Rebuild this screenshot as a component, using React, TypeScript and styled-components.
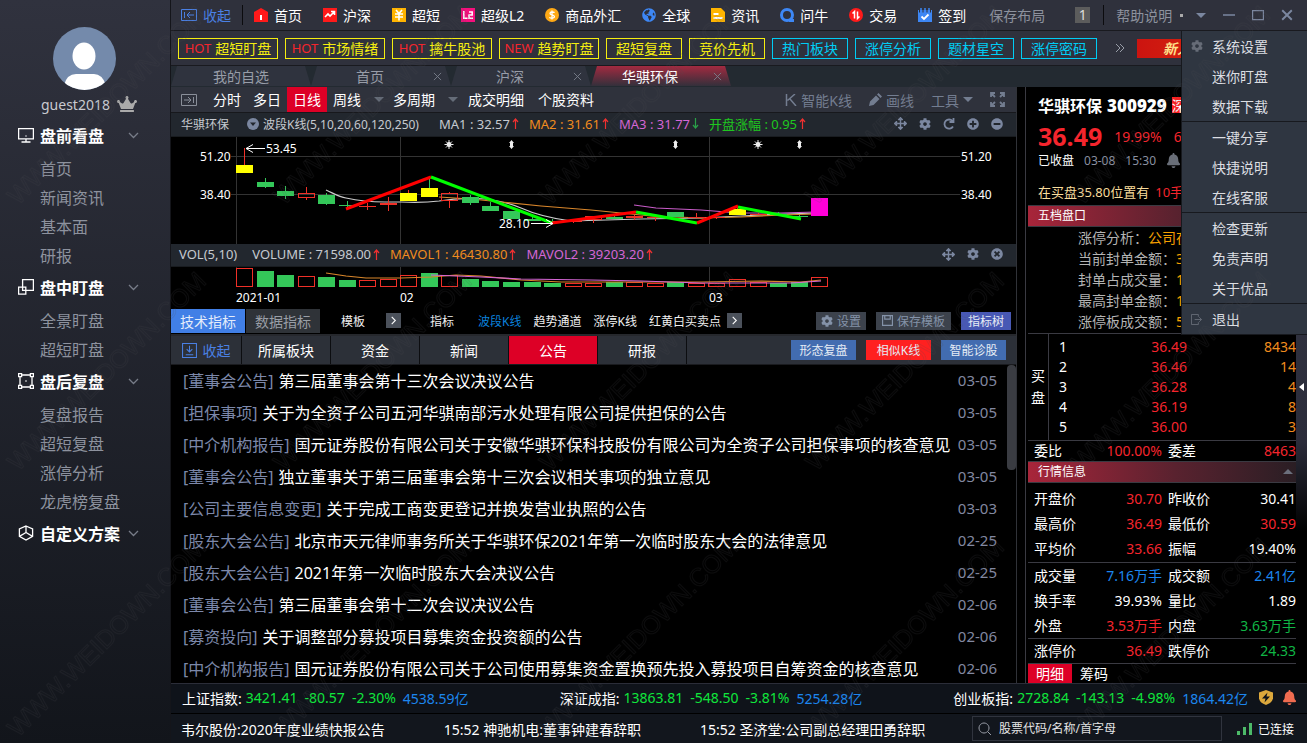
import React from "react";
import styled, { createGlobalStyle, css } from "styled-components";
import {
  FaArrowsAlt,
  FaBell,
  FaCog,
  FaCrown,
  FaGlobeAmericas,
  FaMinusCircle,
  FaPlusCircle,
  FaTimesCircle,
} from "react-icons/fa";

const c = {
  red: "#f5252d",
  accent: "#dd0026",
  orange: "#f08c1e",
  green: "#10b545",
  lime: "#10e53c",
  blue: "#1c86ee",
  slate: "#7b87a0",
  muted: "#8d929e",
  line: "#3a3a42",
};

const GlobalStyle = createGlobalStyle`
  * { box-sizing: border-box; }
  body {
    margin: 0;
    background: #000;
    color: #fff;
    font-family: "Noto Sans", "Noto Sans CJK SC", sans-serif;
    font-size: 14px;
  }
  button, input { font: inherit; color: inherit; }
  button { border: 0; padding: 0; margin: 0; background: none; cursor: pointer; white-space: nowrap; }
  a { color: inherit; text-decoration: none; }
  ul { list-style: none; margin: 0; padding: 0; }
  svg { display: block; flex: none; }
  table { border-collapse: collapse; }
`;

const Page = styled.div`
  position: relative;
  display: flex;
  height: 100vh;
  min-height: 700px;
  overflow: hidden;
  white-space: nowrap;
`;

/* ---------- sidebar ---------- */

const Sidebar = styled.nav`
  flex: none;
  width: 171px;
  border-right: 1px solid #14151a;
  background: linear-gradient(#30323e, #12151b);
`;

const Profile = styled.div`
  height: 118px;
  padding-top: 27px;
`;

const Avatar = styled.svg`
  margin-left: 53px;
`;

const UserName = styled.div`
  display: flex;
  align-items: center;
  gap: 7px;
  height: 28px;
  padding-left: 41px;
  color: #c8cad0;
  svg { color: #aaa; }
`;

const GroupButton = styled.button`
  display: grid;
  grid-template-columns: 16px 80px 12px;
  column-gap: 6px;
  align-items: center;
  width: 100%;
  height: 36px;
  padding: 0 0 2px 18px;
  font-size: 16px;
  font-weight: 700;
  text-align: left;
  svg:last-child { color: #777c88; margin-left: 2px; }
`;

const SideLink = styled.a`
  display: block;
  height: 29px;
  padding-left: 40px;
  line-height: 31px;
  font-size: 16px;
  color: ${c.muted};
`;

const Stroke = (p: { size?: number; w?: number; d: string; box?: number }) => (
  <svg width={p.size ?? 16} height={p.size ?? 16} viewBox={`0 0 ${p.box ?? 16} ${p.box ?? 16}`}
    fill="none" stroke="currentColor" strokeWidth={p.w ?? 1.2}>
    <path d={p.d} />
  </svg>
);

const sideGroups = [
  { title: "盘前看盘", icon: "M.6 1.6h14.8v10.2H.6zM8 11.8v2.8M3.5 15h9M7.5 9h1", items: ["首页", "新闻资讯", "基本面", "研报"] },
  { title: "盘中盯盘", icon: "M4.6 .6h10.8v10.8H4.6zM.6 8.2h7.2v7H.6zM4.6 8v3.4h3.2", items: ["全景盯盘", "超短盯盘"] },
  { title: "盘后复盘", icon: "M2 3.5v9M14 3.5v9M3.5 2h9M3.5 14h9M.6.6h3v3h-3zM12.4.6h3v3h-3zM.6 12.4h3v3h-3zM12.4 12.4h3v3h-3zM7.4 8h1.2", items: ["复盘报告", "超短复盘", "涨停分析", "龙虎榜复盘"] },
  { title: "自定义方案", icon: "M8 1l6.6 3v7.4L8 15l-6.6-3.600V4zM8 1v6.500M8 7.500L1.400 11.400M8 7.500l6.600 3.900", items: [] },
];

/* ---------- top area ---------- */

const Main = styled.main`
  position: relative;
  flex: 1;
  min-width: 0;
  display: flex;
  flex-direction: column;
`;

const TopBar = styled.header`
  display: flex;
  align-items: center;
  flex: none;
  height: 31px;
  padding: 0 14px 0 10px;
  border-bottom: 1px solid #191a1f;
  background: #2f313c;
`;

const Collapse = styled.button`
  display: flex;
  align-items: center;
  gap: 6px;
  color: #4a80e4;
`;

const Rule = styled.span<{ $left: number; $right: number }>`
  width: 1px;
  height: 20px;
  margin: 0 ${(p) => p.$right}px 0 ${(p) => p.$left}px;
  background: #0b0b0e;
`;

const AppLinks = styled.div`
  display: flex;
  gap: 21px;
`;

const AppLink = styled.button`
  display: flex;
  align-items: center;
  gap: 6px;
`;

const TopText = styled.button`
  color: ${c.muted};
  margin-left: 23px;
`;

const Counter = styled.span`
  width: 15px;
  height: 16px;
  margin-left: 30px;
  line-height: 16px;
  text-align: center;
  background: #5c5c5c;
  color: #ddd;
`;

const HelpButton = styled.button`
  display: flex;
  align-items: center;
  gap: 8px;
  color: ${c.muted};
`;

const Dot = styled.i`
  width: 3px;
  height: 3px;
  background: #aaa;
`;

const WindowButtons = styled.div`
  display: flex;
  gap: 17px;
  margin-left: auto;
  color: ${c.slate};
`;

const TagBar = styled.div`
  display: flex;
  align-items: center;
  flex: none;
  gap: 7px;
  height: 35px;
  padding-left: 7px;
  border-bottom: 1px solid #191a1f;
  background: #2f313c;
  overflow: hidden;
`;

const Tag = styled.button<{ $tone: "yellow" | "cyan"; $wide?: boolean }>`
  flex: none;
  display: flex;
  align-items: center;
  justify-content: center;
  gap: 4px;
  width: ${(p) => (p.$wide ? 100 : 76)}px;
  height: 21px;
  border: 1px solid;
  color: ${(p) => (p.$tone === "yellow" ? "#f5ee10" : "#00cdf5")};
  b { font-weight: 400; font-size: 13px; color: ${c.red}; }
`;

const More = styled.button`
  margin: 0 5px 0 11px;
  color: #999ea8;
`;

const Banner = styled.a`
  flex: 1;
  height: 19px;
  padding-left: 26px;
  line-height: 19px;
  font-weight: 700;
  font-style: italic;
  color: #ffe08a;
  background: linear-gradient(90deg, #cc1410, #e03a10);
`;

const TabBar = styled.div`
  display: flex;
  flex: none;
  height: 21px;
  background: #232a31;
`;

const PageTab = styled.div<{ $active?: boolean; $closable?: boolean }>`
  position: relative;
  display: flex;
  align-items: center;
  justify-content: center;
  width: 140px;
  height: 20px;
  padding-right: ${(p) => (p.$closable ? 22 : 0)}px;
  color: ${(p) => (p.$active ? "#fff" : "#989da8")};
  background: ${(p) => (p.$active ? "linear-gradient(#a22a40, #33303b)" : "#2f333e")};
  clip-path: polygon(6px 0, 134px 0, 140px 100%, 0 100%);
`;

const TabClose = styled.button`
  position: absolute;
  right: 9px;
  color: #7b808c;
`;

/* ---------- workspace ---------- */

const Workspace = styled.div`
  flex: 1;
  min-height: 0;
  display: flex;
`;

const ChartColumn = styled.section`
  flex: 1;
  min-width: 0;
  display: flex;
  flex-direction: column;
  border-right: 1px solid #303238;
`;

const PeriodBar = styled.div`
  display: flex;
  align-items: center;
  flex: none;
  height: 26px;
  padding: 0 11px 0 10px;
  border-bottom: 1px solid #17181c;
  background: #2f323c;
`;

const Period = styled.button<{ $active?: boolean; $wide?: boolean }>`
  height: 25px;
  padding: 0 ${(p) => (p.$wide ? 7 : 6)}px 2px;
  background: ${(p) => (p.$active ? c.accent : "none")};
`;

const CaretBox = styled.span`
  width: 20px;
  padding-left: 3px;
  display: flex;
  justify-content: center;
  color: #656c78;
`;

const PeriodRight = styled.div`
  display: flex;
  align-items: center;
  gap: 17px;
  margin-left: auto;
  color: #737d90;
`;

const ToolButton = styled.button`
  display: flex;
  align-items: center;
  gap: 4px;
`;

const Caret = ({ up }: { up?: boolean }) => (
  <svg width="10" height="5" viewBox="0 0 10 5" fill="currentColor">
    <path d={up ? "M0 5h10L5 0z" : "M0 0h10L5 5z"} />
  </svg>
);

const IndicatorBar = styled.div`
  display: flex;
  align-items: center;
  flex: none;
  height: 24px;
  padding: 0 13px 2px 10px;
  border-bottom: 1px solid #191c20;
  background: #22272e;
  font-size: 12px;
  color: #c6cad0;
`;

const VolumeBar = styled(IndicatorBar)`
  height: 23px;
  padding-left: 8px;
`;

const Reading = styled.span<{ $color?: string }>`
  display: flex;
  align-items: center;
  gap: 2px;
  margin-right: 10px;
  font-size: 13px;
  color: ${(p) => p.$color ?? "#c6cad0"};
`;

const VolumeName = styled.span`
  margin-right: 15px;
  font-size: 13px;
`;

const Indicator = styled.span`
  display: flex;
  align-items: center;
  gap: 4px;
  margin: 0 20px 0 18px;
`;

const BarIcons = styled.div`
  display: flex;
  align-items: center;
  gap: 12px;
  margin-left: auto;
  color: ${c.slate};
`;

const Arrow = ({ down }: { down?: boolean }) => (
  <svg width="7" height="11" viewBox="0 0 7 11" fill="none" stroke={down ? "#2aa048" : "#f03030"} strokeWidth="1.2">
    <path d={down ? "M3.500 0v10M1 7l2.500 3L6 7" : "M3.500 11V1M1 4l2.500-3L6 4"} />
  </svg>
);

const Plot = styled.svg`
  width: 100%;
  font-size: 12px;
  background: #000;
`;

type Candle = [kind: "y" | "g" | "r" | "m", top: number, bottom: number, high: number, low: number, volume: number];

const candles: Candle[] = [
  ["y", 28, 36, 11, 28, 19], ["g", 45, 50, 41, 51, 16], ["g", 54, 59, 49, 62, 12], ["r", 56, 61, 50, 63, 11],
  ["g", 58, 67, 56, 68, 10], ["g", 68, 69, 64, 71, 7], ["r", 69, 70, 66, 73, 7], ["r", 66, 68, 60, 74, 8],
  ["y", 56, 64, 53, 56, 12], ["y", 51, 60, 40, 51, 14], ["r", 56, 64, 55, 71, 12], ["g", 60, 66, 58, 68, 8],
  ["g", 69, 74, 65, 74, 6], ["g", 74, 82, 74, 82, 5], ["g", 82, 84, 79, 84, 5], ["g", 84, 85, 82, 87, 4],
  ["r", 84, 85, 82, 86, 4], ["r", 79, 83, 79, 86, 4], ["g", 80, 82, 79, 82, 5], ["r", 79, 81, 78, 83, 5],
  ["r", 80, 81, 79, 84, 4], ["g", 75, 80, 75, 80, 5], ["r", 80, 81, 76, 81, 4], ["r", 80, 81, 80, 82, 4],
  ["y", 72, 78, 71, 78, 8], ["r", 77, 78, 76, 78, 5], ["g", 77, 78, 75, 79, 4], ["g", 79, 80, 78, 81, 5],
  ["m", 61, 79, 61, 79, 10],
];

const bodyColor = { y: "#ffff00", g: "#34c759", r: "#f03028", m: "#ff00d8" };
const candleX = (i: number) => 65 + Math.round(i * 20.54);
const rising = (i: number) => ![1, 2, 4, 5, 9, 11, 12, 13, 14, 15, 18, 21, 26, 27].includes(i);

const PriceChart = () => (
  <Plot height="107" role="img" aria-label="日线走势图">
    <g stroke="#333" shapeRendering="crispEdges">
      <line x1="60" x2="100%" y1="19.500" y2="19.500" />
      <line x1="60" x2="100%" y1="57.500" y2="57.500" />
      {[65.5, 229.5, 538.5].map((x) => <line key={x} x1={x} x2={x} y1="0" y2="107" />)}
    </g>
    <svg x="100%" overflow="visible">
      <rect x="-56" y="8" width="56" height="60" fill="#000" />
      <text x="-55" y="24" fill="#fff">51.20</text>
      <text x="-55" y="62" fill="#fff">38.40</text>
    </svg>
    <g fill="#fff">
      <text x="29" y="24">51.20</text>
      <text x="29" y="62">38.40</text>
    </g>
    <g fill="none" strokeWidth="1.2">
      <path stroke="#ccc" d="M155 53C162 56 168 60 175 61Q193 65 214 65H230Q252 66 268 64Q290 60 314 62Q334 64 350 71Q370 80 400 84L470 82L530 81L590 78L645 76" />
      <path stroke="#d9862b" d="M268 60L300 62L330 65L370 69L420 73L480 79L530 81L570 80L610 78L645 77" />
      <path stroke="#c85cc8" d="M463 68L485 71L530 73L568 76L610 76L645 75" />
    </g>
    <g shapeRendering="crispEdges">
      {candles.map(([k, top, bottom, high, low], i) => {
        const x = candleX(i);
        const hollow = k === "r" && bottom - top > 2;
        const wick = k === "g" || i === 9 ? "#34c759" : "#f03028";
        return (
          <g key={i}>
            <path d={`M${x + 8.5} ${high}V${top}M${x + 8.5} ${bottom}V${low}`} stroke={wick} />
            <rect x={hollow ? x + 0.5 : x} y={hollow ? top + 0.5 : top} width={hollow ? 16 : 17}
              height={hollow ? bottom - top - 1 : bottom - top}
              fill={hollow ? "none" : bodyColor[k]} stroke={hollow ? bodyColor[k] : "none"} />
          </g>
        );
      })}
    </g>
    <g fill="none" strokeWidth="3">
      <path stroke="#f00" d="M175 72L260 40" />
      <path stroke="#0f0" d="M260 40L381 86" />
      <path stroke="#f00" d="M381 86L465 75" />
      <path stroke="#0f0" d="M465 75L526 86" />
      <path stroke="#f00" d="M526 86L567 69" />
      <path stroke="#0f0" d="M567 70L630 82" />
    </g>
    <g stroke="#fff" fill="none">
      <path d="M94 11.500H75M82 7.500L75 11.500L82 15.500M360 86.500H382M375 82.500L382 86.500L375 90.500" />
    </g>
    <text x="95" y="16" fill="#fff">53.45</text>
    <text x="328" y="91" fill="#fff">28.10</text>
    {[278, 587].map((x) => (
      <g key={x} stroke="#eee" strokeWidth="1">
        <circle cx={x} cy="7.500" r="2" fill="#eee" />
        <path d={`M${x} 3v9M${x - 4.5} 7.500h9M${x - 3} 4.500l6 6M${x - 3} 10.500l6-6`} />
      </g>
    ))}
    {[340, 504, 628].map((x) => (
      <path key={x} fill="#eee" d={`M${x + 0.5} 3l2.500 3h-1v3h1l-2.500 3-2.500-3h1v-3h-1z`} />
    ))}
  </Plot>
);

const VolumeChart = () => (
  <Plot height="42" role="img" aria-label="成交量">
    <path stroke="#333" d="M65.500 0v20M229.500 0v20M538.500 0v20" />
    <g shapeRendering="crispEdges">
      {candles.map((row, i) => {
        const h = row[5];
        const x = candleX(i);
        return rising(i)
          ? <rect key={i} x={x + 0.5} y={20.5 - h} width="16" height={h - 1} fill="none" stroke="#f03028" />
          : <rect key={i} x={x} y={20 - h} width="17" height={h} fill="#34c759" />;
      })}
    </g>
    <g fill="none" strokeWidth="1.200">
      <path stroke="#d9862b" d="M155 6L175 9L195 11H230L260 10L285 8L310 9L350 13L390 15H530L590 14L630 15L650 13" />
      <path stroke="#d566d5" d="M260 8L310 10L350 12L420 13L470 14L530 16H620L650 14" />
    </g>
    <g fill="#fff">
      <text x="65" y="35">2021-01</text>
      <text x="229" y="35">02</text>
      <text x="538" y="35">03</text>
    </g>
  </Plot>
);

const TemplateBar = styled.div`
  display: flex;
  align-items: center;
  flex: none;
  height: 27px;
  padding: 0 5px 2px 0;
  border-bottom: 2px solid #26282d;
  font-size: 12px;
`;

const ModeTab = styled.button<{ $active?: boolean }>`
  width: 74px;
  height: 24px;
  margin-right: 1px;
  font-size: 14px;
  color: ${(p) => (p.$active ? "#e4ecfa" : "#999ea6")};
  background: ${(p) => (p.$active ? "#417fe6" : "#2f3338")};
`;

const TemplateText = styled.button<{ $gap: number; $active?: boolean }>`
  margin-left: ${(p) => p.$gap}px;
  color: ${(p) => (p.$active ? "#0a80dc" : "#f0f0f0")};
`;

const NextButton = styled.button<{ $gap: number }>`
  display: grid;
  place-items: center;
  width: 15px;
  height: 15px;
  margin-left: ${(p) => p.$gap}px;
  background: #4b515b;
`;

const ButtonSet = styled.div`
  display: flex;
  gap: 10px;
  margin-left: auto;
`;

const SmallButton = styled.button<{ $w: number; $bg: string; $fg?: string; $h?: number }>`
  display: flex;
  align-items: center;
  justify-content: center;
  gap: 4px;
  width: ${(p) => p.$w}px;
  height: ${(p) => p.$h ?? 18}px;
  font-size: 12px;
  background: ${(p) => p.$bg};
  color: ${(p) => p.$fg ?? "#e6ecf5"};
`;

const NewsTabs = styled.div`
  display: flex;
  flex: none;
  height: 29px;
  padding-right: 10px;
  border-bottom: 1px solid #1a1b1f;
  background: #2c3038;
`;

const NewsTab = styled.button<{ $active?: boolean; $first?: boolean }>`
  display: flex;
  align-items: center;
  justify-content: center;
  gap: 6px;
  width: ${(p) => (p.$first ? 71 : 89)}px;
  border-right: 1px solid #0c0d10;
  color: ${(p) => (p.$first ? "#4a80e4" : "#fff")};
  background: ${(p) => (p.$active ? c.accent : "none")};
`;

const NewsButtons = styled(ButtonSet)`
  padding-top: 4px;
`;

const NewsArea = styled.div`
  flex: 1;
  min-height: 0;
  display: flex;
`;

const NewsList = styled.ul`
  flex: 1;
  min-width: 0;
  overflow: hidden;
`;

const NewsRow = styled.li`
  display: flex;
  align-items: center;
  height: 32px;
  padding: 0 10px 2px 12px;
  font-size: 16px;
  span { color: #7c88aa; margin-right: 5px; }
  time { margin-left: auto; font-size: 15px; color: #8288a0; }
`;

const Thumb = styled.div`
  width: 9px;
  height: 105px;
  border-radius: 4px;
  background: #3a3c42;
`;

/* ---------- quote panel ---------- */

const QuotePanel = styled.aside`
  flex: none;
  width: 282px;
  margin-left: 8px;
  border-left: 1px solid #3a3a42;
  padding-left: 2px;
  display: flex;
`;

const QuoteBody = styled.div`
  flex: 1;
  min-width: 0;
  overflow: hidden;
`;

const SideStrip = styled.button`
  flex: none;
  display: flex;
  align-items: center;
  width: 11px;
  height: 444px;
  padding: 155px 0 0 3px;
  background: linear-gradient(#30323f 50%, #2b2c3a 80%, #000);
`;

const StockName = styled.h1`
  display: flex;
  align-items: center;
  gap: 5px;
  height: 36px;
  margin: 0;
  padding-left: 10px;
  font-size: 16px;
  b { font-size: 17px; }
  i { width: 16px; height: 16px; font: 400 14px/16px "Noto Sans CJK SC", sans-serif; background: #ff2020; }
`;

const PriceRow = styled.div`
  display: flex;
  align-items: center;
  gap: 12px;
  height: 26px;
  padding-left: 10px;
  color: ${c.red};
  b { font-size: 25px; line-height: 26px; }
`;

const StateRow = styled.div`
  display: flex;
  align-items: center;
  gap: 10px;
  height: 22px;
  padding-left: 10px;
  font-size: 12px;
  span { color: #8a90a0; }
  svg { color: #696e78; }
`;

const TipRow = styled.div`
  height: 34px;
  padding: 8px 0 0 10px;
  line-height: 26px;
  font-size: 13px;
  color: #f8dc9c;
  span { color: ${c.red}; margin-left: 6px; }
`;

const Band = styled.h2`
  display: flex;
  align-items: center;
  justify-content: space-between;
  height: 22px;
  margin: 0;
  padding: 0 3px 2px 10px;
  border: solid ${c.line};
  border-width: 1px 0;
  font-size: 12px;
  font-weight: 400;
  background: linear-gradient(90deg, #a8253a, #59222f 55%, #2a1e24);
  svg { color: #6b6f7c; }
`;

const FactList = styled.ul`
  height: 107px;
  padding-left: 50px;
  border-bottom: 1px solid ${c.line};
  color: #b4b4b4;
  li { height: 21px; line-height: 21px; }
  span { color: #f5a000; }
`;

const Depth = styled.div`
  display: flex;
  border-bottom: 1px solid ${c.line};
`;

const DepthLabel = styled.div`
  width: 21px;
  display: flex;
  align-items: center;
  justify-content: center;
  border-right: 1px solid ${c.line};
  white-space: normal;
  line-height: 22px;
  text-align: center;
`;

const DepthTable = styled.table`
  flex: 1;
  margin: 3px 0;
  td { height: 20px; padding: 0; line-height: 20px; text-align: right; }
  td:first-child { width: 10px; padding-left: 10px; text-align: left; }
  td:nth-child(2) { color: ${c.red}; width: 120px; }
  td:last-child { color: ${c.orange}; }
`;

const QuoteTable = styled.table<{ $row: number; $pad?: number }>`
  width: 100%;
  table-layout: fixed;
  ${(p) => p.$pad && css`margin: ${p.$pad}px 0 1px;`}
  th, td { height: ${(p) => p.$row}px; padding: 0; line-height: 18px; font-weight: 400; }
  th { width: 18%; padding-left: 6px; text-align: left; }
  td { width: 32%; text-align: right; }
`;

const Divider = styled.hr`
  height: 1px;
  margin: 0;
  border: 0;
  background: ${c.line};
`;

const Value = styled.td<{ $c?: string }>`
  color: ${(p) => p.$c ?? "#fff"};
`;

const DetailTabs = styled.div`
  display: flex;
  height: 20px;
`;

const DetailTab = styled.button<{ $active?: boolean }>`
  width: 44px;
  line-height: 20px;
  background: ${(p) => (p.$active ? c.accent : "none")};
`;

type Cell = [label: string, value: string, color?: string];

const Quotes = ({ rows, row, pad }: { rows: [Cell, Cell][]; row: number; pad?: number }) => (
  <QuoteTable $row={row} $pad={pad}>
    <tbody>
      {rows.map((pair) => (
        <tr key={pair[0][0]}>
          {pair.map(([label, value, color]) => (
            <React.Fragment key={label}>
              <th scope="row">{label}</th>
              <Value $c={color}>{value}</Value>
            </React.Fragment>
          ))}
        </tr>
      ))}
    </tbody>
  </QuoteTable>
);

/* ---------- bottom bars ---------- */

const IndexBar = styled.div`
  display: flex;
  align-items: center;
  flex: none;
  height: 31px;
  padding: 0 10px 2px 11px;
  border-top: 1px solid #2b2d38;
  border-bottom: 1px solid #000;
  background: #0f131a;
`;

const IndexList = styled.ul`
  flex: 1;
  display: flex;
  justify-content: space-between;
`;

const IndexItem = styled.li`
  display: flex;
  gap: 7px;
  color: ${c.lime};
  b { font-weight: 400; color: #fff; margin-right: -3px; }
  span:last-child { color: ${c.blue}; }
`;

const AlertIcons = styled.div`
  display: flex;
  gap: 9px;
  margin-left: 11px;
`;

const Ticker = styled.footer`
  display: flex;
  align-items: center;
  flex: none;
  height: 29px;
  padding: 0 13px 0 10px;
  background: #12161d;
`;

const TickerList = styled.div`
  display: flex;
  gap: 59px;
`;

const Search = styled.label`
  flex: none;
  display: flex;
  align-items: center;
  gap: 7px;
  width: 250px;
  height: 25px;
  margin-left: auto;
  padding-left: 5px;
  border: 1px solid #30343e;
  color: #9a9ea8;
`;

const SearchInput = styled.input`
  flex: 1;
  min-width: 0;
  padding: 0;
  border: 0;
  outline: 0;
  background: none;
  font-size: 12px;
  color: #fff;
  &::placeholder { color: #e6e6e6; opacity: 1; }
`;

const Connection = styled.div`
  display: flex;
  align-items: center;
  gap: 6px;
  margin-left: 15px;
  font-size: 12px;
`;

/* ---------- settings menu ---------- */

const Menu = styled.div`
  position: absolute;
  top: 31px;
  right: 0;
  width: 126px;
  border: solid #17191e;
  border-width: 0 0 1px 1px;
  background: #2f3641;
`;

const MenuGroup = styled.ul`
  & + & { border-top: 1px solid #17191e; }
`;

const MenuItem = styled.button`
  position: relative;
  display: flex;
  align-items: center;
  width: 100%;
  height: 30px;
  padding-left: 30px;
  color: #dcdee2;
  svg { position: absolute; left: 9px; color: #666c77; }
`;

const Watermark = styled.svg`
  position: absolute;
  inset: 0;
  width: 100%;
  height: 100%;
  pointer-events: none;
`;

/* ---------- icons of the top bar ---------- */

const Tile = ({ fill, children }: { fill: string; children: React.ReactNode }) => (
  <svg width="14" height="14" viewBox="0 0 14 14"><rect width="14" height="14" fill={fill} />{children}</svg>
);

const apps: [string, React.ReactNode][] = [
  ["首页", <svg width="14" height="14" viewBox="0 0 14 14"><path fill="#ff1a1a" d="M7 0l7 4v10H0V4z" /><path stroke="#fff" strokeWidth="2" d="M7 7v5" /></svg>],
  ["沪深", <Tile fill="#ff1a1a"><path d="M2 9l3-3 2 2 4-4M8 3.500h3.500V7" fill="none" stroke="#fff" strokeWidth="1.600" /></Tile>],
  ["超短", <Tile fill="#ffb400"><path d="M4 2l3 3.500L10 2M3 6h8M3 9h8M7 5.500V12.500" fill="none" stroke="#fff" strokeWidth="1.600" /></Tile>],
  ["超级L2", <Tile fill="#f50f7d"><path d="M2.800 3v7.200H6.500M8 4h3.200v3H8v3.200h4" fill="none" stroke="#fff" strokeWidth="1.500" /></Tile>],
  ["商品外汇", <svg width="14" height="14" viewBox="0 0 14 14"><circle cx="7" cy="7" r="7" fill="#ffa915" /><path d="M9.500 4.800C9 3.800 5 3.500 5 5.400s4.400 1.200 4.400 3.200S5 10.600 4.500 9.200M7 2.500v9" fill="none" stroke="#fff" strokeWidth="1.300" /></svg>],
  ["全球", <FaGlobeAmericas size={14} color="#3d87f5" />],
  ["资讯", <svg width="14" height="14" viewBox="0 0 14 14"><path fill="#ffb400" d="M0 0h10l4 4v10H0z" /><path stroke="#fff" strokeWidth="2" d="M2.500 6h5M2.500 10h9" /></svg>],
  ["问牛", <svg width="14" height="14" viewBox="0 0 14 14" fill="none" stroke="#3d87f5" strokeWidth="3"><circle cx="7" cy="7" r="5.500" /><path d="M9 12.500h5" /></svg>],
  ["交易", <svg width="14" height="14" viewBox="0 0 14 14"><circle cx="7" cy="7" r="7" fill="#ff1a1a" /><path d="M3.500 5.500l2-2v7M8.500 3.500v7l2-2" fill="none" stroke="#fff" strokeWidth="1.500" /></svg>],
  ["签到", <svg width="14" height="14" viewBox="0 0 14 14"><path fill="#3d87f5" d="M0 2h14v12H0z" /><path stroke="#3d87f5" strokeWidth="1.500" d="M3 0v4M7 0v4M11 0v4" /><path stroke="#2f313c" d="M1.500 1v3.500M5 1v3.500M9 1v3.500M12.500 1v3.500" /><path d="M3.500 8.500l2.500 2.500 4.500-4.500" fill="none" stroke="#fff" strokeWidth="1.800" /></svg>],
];

const tags: [string, "yellow" | "cyan", string?][] = [
  ["超短盯盘", "yellow", "HOT"], ["市场情绪", "yellow", "HOT"], ["擒牛股池", "yellow", "HOT"], ["趋势盯盘", "yellow", "NEW"],
  ["超短复盘", "yellow"], ["竞价先机", "yellow"], ["热门板块", "cyan"], ["涨停分析", "cyan"], ["题材星空", "cyan"], ["涨停密码", "cyan"],
];

const news = [
  ["董事会公告", "第三届董事会第十三次会议决议公告", "03-05"],
  ["担保事项", "关于为全资子公司五河华骐南部污水处理有限公司提供担保的公告", "03-05"],
  ["中介机构报告", "国元证券股份有限公司关于安徽华骐环保科技股份有限公司为全资子公司担保事项的核查意见", "03-05"],
  ["董事会公告", "独立董事关于第三届董事会第十三次会议相关事项的独立意见", "03-05"],
  ["公司主要信息变更", "关于完成工商变更登记并换发营业执照的公告", "03-03"],
  ["股东大会公告", "北京市天元律师事务所关于华骐环保2021年第一次临时股东大会的法律意见", "02-25"],
  ["股东大会公告", "2021年第一次临时股东大会决议公告", "02-25"],
  ["董事会公告", "第三届董事会第十二次会议决议公告", "02-06"],
  ["募资投向", "关于调整部分募投项目募集资金投资额的公告", "02-06"],
  ["中介机构报告", "国元证券股份有限公司关于公司使用募集资金置换预先投入募投项目自筹资金的核查意见", "02-06"],
];

const closeD = "M1 1l8 8M9 1L1 9";

export default function App() {
  return (
    <Page>
      <GlobalStyle />
      <Sidebar>
        <Profile>
          <Avatar width="63" height="63" viewBox="0 0 63 63">
            <defs><clipPath id="avatar"><circle cx="31.500" cy="31.500" r="31.500" /></clipPath></defs>
            <g clipPath="url(#avatar)">
              <rect width="63" height="63" fill="#748aab" />
              <ellipse cx="31" cy="29" rx="11.500" ry="13.500" fill="#fff" />
              <path fill="#fff" d="M11 58Q14 47 23 47H41Q49 47 53 58V63H11z" />
            </g>
          </Avatar>
          <UserName>guest2018<FaCrown size={20} /></UserName>
        </Profile>
        {sideGroups.map((g) => (
          <div key={g.title}>
            <GroupButton>
              <Stroke d={g.icon} w={1.3} />
              {g.title}
              <Stroke d="M1 3l4.500 4.500L10 3" box={11} size={11} w={1.3} />
            </GroupButton>
            {g.items.map((t) => <SideLink href="#" key={t}>{t}</SideLink>)}
          </div>
        ))}
      </Sidebar>

      <Main>
        <TopBar>
          <Collapse>
            <svg width="16" height="12" viewBox="0 0 16 12" fill="none" stroke="currentColor"><path d="M.5.5h15v11H.5zM3.500 3v6M13 6H6M9 3L6 6l3 3" /></svg>
            收起
          </Collapse>
          <Rule $left={11} $right={11} />
          <AppLinks>
            {apps.map(([name, icon]) => <AppLink key={name}>{icon}{name}</AppLink>)}
          </AppLinks>
          <TopText>保存布局</TopText>
          <Counter>1</Counter>
          <Rule $left={13} $right={12} />
          <HelpButton>帮助说明<Dot /></HelpButton>
          <WindowButtons>
            <button aria-label="菜单"><Caret /></button>
            <button aria-label="最小化"><Stroke box={12} size={12} w={1.5} d="M0 6h12" /></button>
            <button aria-label="最大化"><Stroke box={12} size={12} w={1.2} d="M.6 1.600h10.800v9H.6z" /></button>
            <button aria-label="关闭"><Stroke box={10} size={12} w={1.6} d={closeD} /></button>
          </WindowButtons>
        </TopBar>

        <TagBar>
          {tags.map(([name, tone, flag]) => (
            <Tag key={name} $tone={tone} $wide={!!flag}>{flag && <b>{flag}</b>}{name}</Tag>
          ))}
          <More aria-label="更多"><Stroke box={10} size={10} w={1} d="M1 1l4 4-4 4M5 1l4 4-4 4" /></More>
          <Banner href="#">新人</Banner>
        </TagBar>

        <TabBar>
          {["我的自选", "首页", "沪深", "华骐环保"].map((t, i) => (
            <PageTab key={t} $active={i === 3} $closable={i > 0}>
              {t}
              {i > 0 && <TabClose aria-label="关闭标签"><Stroke box={10} size={9} w={1} d={closeD} /></TabClose>}
            </PageTab>
          ))}
        </TabBar>

        <Workspace>
          <ChartColumn>
            <PeriodBar>
              <svg width="26" height="12" viewBox="0 0 26 12" fill="none" stroke="#8a8f99"><path d="M.5.5h15v11H.5zM12.500 3v6M3 6h7M7 3l3 3-3 3" /></svg>
              <Period>分时</Period>
              <Period>多日</Period>
              <Period $active>日线</Period>
              <Period>周线</Period>
              <CaretBox><Caret /></CaretBox>
              <Period>多周期</Period>
              <CaretBox><Caret /></CaretBox>
              <Period $wide>成交明细</Period>
              <Period $wide>个股资料</Period>
              <PeriodRight>
                <ToolButton><Stroke box={12} size={12} w={1.5} d="M1.500 0v12M10 0L2.500 6.500M5 5l6 7" />智能K线</ToolButton>
                <ToolButton>
                  <svg width="13" height="13" viewBox="0 0 13 13" fill="currentColor"><path d="M0 13l1-4.500L7 2.500 10.500 6 4.500 12zM8 1.500L9.500 0 13 3.500 11.500 5z" /></svg>
                  画线
                </ToolButton>
                <ToolButton>工具<Caret /></ToolButton>
                <button aria-label="全屏">
                  <Stroke box={15} size={15} w={1.8} d="M1 5V1h4M1 1l4 4M10 1h4v4M14 1l-4 4M1 10v4h4M1 14l4-4M10 14h4v-4M14 14l-4-4" />
                </button>
              </PeriodRight>
            </PeriodBar>

            <IndicatorBar>
              华骐环保
              <Indicator>
                <svg width="12" height="12" viewBox="0 0 12 12"><circle cx="6" cy="6" r="6" fill={c.slate} /><path d="M3 4.500h6L6 8z" fill="#22272e" /></svg>
                波段K线(5,10,20,60,120,250)
              </Indicator>
              <Reading>MA1 : 32.57<Arrow /></Reading>
              <Reading $color={c.orange}>MA2 : 31.61<Arrow /></Reading>
              <Reading $color="#d566d5">MA3 : 31.77<Arrow down /></Reading>
              <Reading $color="#1fc71f">开盘涨幅 : 0.95<Arrow /></Reading>
              <BarIcons>
                <FaArrowsAlt size={13} /><FaCog size={12} />
                <Stroke box={12} size={12} w={1.8} d="M10 8.500A4.600 4.600 0 1 1 9.500 3M10.500 0v4H6.500" />
                <FaPlusCircle size={12} /><FaMinusCircle size={12} />
              </BarIcons>
            </IndicatorBar>
            <PriceChart />

            <VolumeBar>
              <VolumeName>VOL(5,10)</VolumeName>
              <Reading>VOLUME : 71598.00<Arrow /></Reading>
              <Reading $color={c.orange}>MAVOL1 : 46430.80<Arrow /></Reading>
              <Reading $color="#d566d5">MAVOL2 : 39203.20<Arrow /></Reading>
              <BarIcons><FaArrowsAlt size={13} /><FaCog size={12} /><FaTimesCircle size={12} /></BarIcons>
            </VolumeBar>
            <VolumeChart />

            <TemplateBar>
              <ModeTab $active>技术指标</ModeTab>
              <ModeTab>数据指标</ModeTab>
              <TemplateText $gap={20}>模板</TemplateText>
              <NextButton $gap={21} aria-label="下一个模板"><Stroke box={10} size={9} w={1.2} d="M3 1l4 4-4 4" /></NextButton>
              <TemplateText $gap={29}>指标</TemplateText>
              <TemplateText $gap={24} $active>波段K线</TemplateText>
              <TemplateText $gap={12}>趋势通道</TemplateText>
              <TemplateText $gap={12}>涨停K线</TemplateText>
              <TemplateText $gap={12}>红黄白买卖点</TemplateText>
              <NextButton $gap={6} aria-label="更多指标"><Stroke box={10} size={9} w={1.2} d="M3 1l4 4-4 4" /></NextButton>
              <ButtonSet>
                <SmallButton $w={50} $bg="#3c424c" $fg="#8492a8"><FaCog size={12} />设置</SmallButton>
                <SmallButton $w={75} $bg="#3c424c" $fg="#8492a8"><Stroke box={12} size={11} w={1.3} d="M.6.6h10.800v10.800H.6zM3 1v3.500h6V1" />保存模板</SmallButton>
                <SmallButton $w={50} $bg="#4858b4">指标树</SmallButton>
              </ButtonSet>
            </TemplateBar>

            <NewsTabs>
              <NewsTab $first><Stroke box={16} size={15} w={1.1} d="M.6.6h14.800v14.800H.6zM8 3v6M5 6.500l3 3 3-3M4 12.500h8" />收起</NewsTab>
              {["所属板块", "资金", "新闻", "公告", "研报"].map((t) => <NewsTab key={t} $active={t === "公告"}>{t}</NewsTab>)}
              <NewsButtons>
                <SmallButton $w={65} $h={20} $bg="#426cb0">形态复盘</SmallButton>
                <SmallButton $w={65} $h={20} $bg="#ff2020">相似K线</SmallButton>
                <SmallButton $w={65} $h={20} $bg="#426cb0">智能诊股</SmallButton>
              </NewsButtons>
            </NewsTabs>
            <NewsArea>
              <NewsList>
                {news.map(([kind, title, date]) => (
                  <NewsRow key={kind + title}><span>[{kind}]</span><a href="#">{title}</a><time>{date}</time></NewsRow>
                ))}
              </NewsList>
              <Thumb />
            </NewsArea>
          </ChartColumn>

          <QuotePanel>
            <QuoteBody>
              <StockName>华骐环保 <b>300929</b><i>深</i></StockName>
              <PriceRow><b>36.49</b><span>19.99%</span><span>6.08</span></PriceRow>
              <StateRow>已收盘<span>03-08</span><span>15:30</span><FaBell size={15} /></StateRow>
              <TipRow>在买盘35.80位置有<span>10手</span></TipRow>
              <Band>五档盘口</Band>
              <FactList>
                <li>涨停分析：<span>公司在</span></li>
                <li>当前封单金额：<span>3</span></li>
                <li>封单占成交量：<span>1</span></li>
                <li>最高封单金额：<span>1</span></li>
                <li>涨停板成交额：<span>5</span></li>
              </FactList>
              <Depth>
                <DepthLabel>买<br />盘</DepthLabel>
                <DepthTable>
                  <tbody>
                    {[["36.49", "8434"], ["36.46", "14"], ["36.28", "4"], ["36.19", "8"], ["36.00", "3"]].map(([price, qty], i) => (
                      <tr key={price}><td>{i + 1}</td><td>{price}</td><td>{qty}</td></tr>
                    ))}
                  </tbody>
                </DepthTable>
              </Depth>
              <Quotes row={20} rows={[[["委比", "100.00%", c.red], ["委差", "8463", c.red]]]} />
              <Band>行情信息<Caret up /></Band>
              <Quotes row={25} pad={3} rows={[
                [["开盘价", "30.70", c.red], ["昨收价", "30.41"]],
                [["最高价", "36.49", c.red], ["最低价", "30.59", c.red]],
                [["平均价", "33.66", c.red], ["振幅", "19.40%"]],
              ]} />
              <Divider />
              <Quotes row={25} rows={[
                [["成交量", "7.16万手", c.blue], ["成交额", "2.41亿", c.blue]],
                [["换手率", "39.93%"], ["量比", "1.89"]],
                [["外盘", "3.53万手", c.red], ["内盘", "3.63万手", c.green]],
              ]} />
              <Divider />
              <Quotes row={24} rows={[[["涨停价", "36.49", c.red], ["跌停价", "24.33", c.green]]]} />
              <Divider />
              <DetailTabs><DetailTab $active>明细</DetailTab><DetailTab>筹码</DetailTab></DetailTabs>
            </QuoteBody>
            <SideStrip aria-label="收起侧栏"><svg width="5" height="8" viewBox="0 0 5 8" fill="#fff"><path d="M5 0v8L0 4z" /></svg></SideStrip>
          </QuotePanel>
        </Workspace>

        <IndexBar>
          <IndexList>
            {[
              ["上证指数:", "3421.41", "-80.57", "-2.30%", "4538.59亿"],
              ["深证成指:", "13863.81", "-548.50", "-3.81%", "5254.28亿"],
              ["创业板指:", "2728.84", "-143.13", "-4.98%", "1864.42亿"],
            ].map(([name, a, b, p, amount]) => (
              <IndexItem key={name}>
                <b>{name}</b><span>{a}</span><span>{b}</span><span>{p}</span><span>{amount}</span>
              </IndexItem>
            ))}
          </IndexList>
          <AlertIcons>
            <svg width="14" height="15" viewBox="0 0 14 15"><path fill="#dca83c" d="M7 0l7 2.500v6Q13 13 7 15 1 13 0 8.500v-6z" /><path fill="#0f131a" d="M8.500 2.500L3 8.500h3.500L5.500 12.500 11 6.500H7.500z" /></svg>
            <FaBell size={15} color="#f06c50" />
          </AlertIcons>
        </IndexBar>

        <Ticker>
          <TickerList>
            <a href="#">韦尔股份:2020年度业绩快报公告</a>
            <a href="#"><time>15:52</time> 神驰机电:董事钟建春辞职</a>
            <a href="#"><time>15:52</time> 圣济堂:公司副总经理田勇辞职</a>
          </TickerList>
          <Search>
            <Stroke box={14} size={14} w={1} d="M6 1a5 5 0 1 0 .01 0M9.800 9.800L13 13" />
            <SearchInput aria-label="搜索" placeholder="股票代码/名称/首字母" />
          </Search>
          <Connection>
            <svg width="15" height="12" viewBox="0 0 15 12" fill="#4cba68"><path d="M0 8h3v4H0zM6 4h3v8H6zM12 0h3v12h-3z" /></svg>
            已连接
          </Connection>
        </Ticker>

        <Menu>
          {[["系统设置", "迷你盯盘", "数据下载"], ["一键分享", "快捷说明", "在线客服"], ["检查更新", "免责声明", "关于优品"], ["退出"]].map((group) => (
            <MenuGroup key={group[0]}>
              {group.map((t) => (
                <li key={t}>
                  <MenuItem>
                    {t === "系统设置" && <FaCog size={12} />}
                    {t === "退出" && <Stroke box={12} size={11} w={1} d="M8 3V.5H.5v11H8V9M4 6h7.500M9 3.500L11.500 6 9 8.500" />}
                    {t}
                  </MenuItem>
                </li>
              ))}
            </MenuGroup>
          ))}
        </Menu>
      </Main>

      <Watermark aria-hidden="true">
        <defs>
          <pattern id="mark" width="266" height="266" patternUnits="userSpaceOnUse">
            <text transform="translate(18 206) rotate(-45)" fontFamily="Liberation Sans, sans-serif" fontSize="25"
              fill="none" stroke="#46464a" strokeOpacity=".17">WWW.WEIDOWN.COM</text>
          </pattern>
        </defs>
        <rect width="100%" height="100%" fill="url(#mark)" />
      </Watermark>
    </Page>
  );
}
